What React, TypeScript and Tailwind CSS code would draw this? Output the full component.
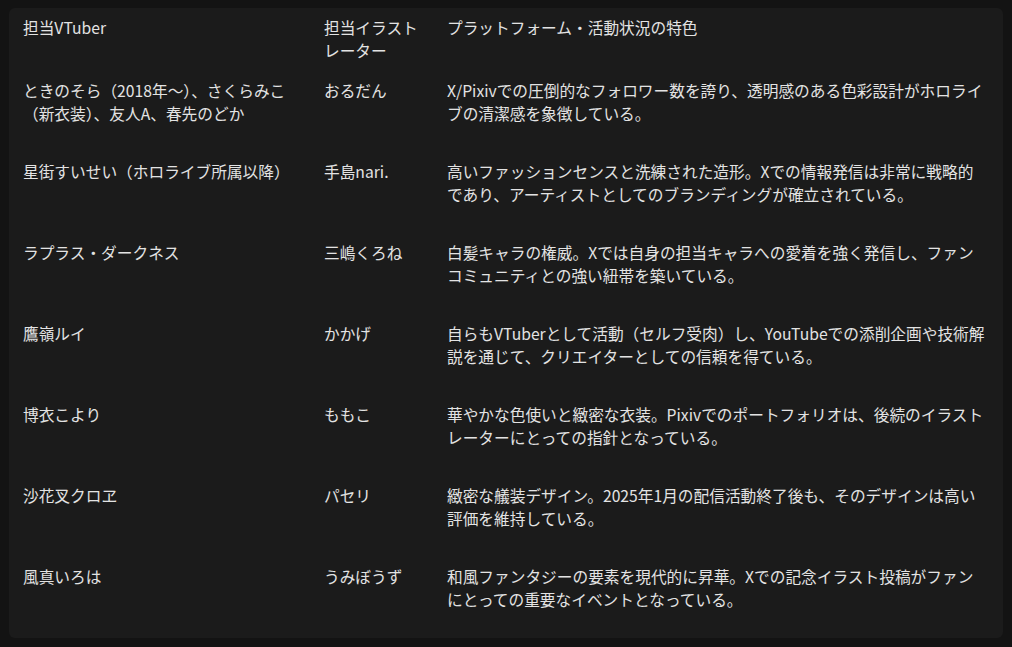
// Line breaks follow the reference table's wrapping.
const ROWS: [string, string, string][] = [
  [
    'ときのそら（2018年〜）、さくらみこ\n（新衣装）、友人A、春先のどか',
    'おるだん',
    'X/Pixivでの圧倒的なフォロワー数を誇り、透明感のある色彩設計がホロライ\nブの清潔感を象徴している。',
  ],
  [
    '星街すいせい（ホロライブ所属以降）',
    '手島nari.',
    '高いファッションセンスと洗練された造形。Xでの情報発信は非常に戦略的\nであり、アーティストとしてのブランディングが確立されている。',
  ],
  [
    'ラプラス・ダークネス',
    '三嶋くろね',
    '白髪キャラの権威。Xでは自身の担当キャラへの愛着を強く発信し、ファン\nコミュニティとの強い紐帯を築いている。',
  ],
  [
    '鷹嶺ルイ',
    'かかげ',
    '自らもVTuberとして活動（セルフ受肉）し、YouTubeでの添削企画や技術解\n説を通じて、クリエイターとしての信頼を得ている。',
  ],
  [
    '博衣こより',
    'ももこ',
    '華やかな色使いと緻密な衣装。Pixivでのポートフォリオは、後続のイラスト\nレーターにとっての指針となっている。',
  ],
  [
    '沙花叉クロヱ',
    'パセリ',
    '緻密な艤装デザイン。2025年1月の配信活動終了後も、そのデザインは高い\n評価を維持している。',
  ],
  [
    '風真いろは',
    'うみぼうず',
    '和風ファンタジーの要素を現代的に昇華。Xでの記念イラスト投稿がファン\nにとっての重要なイベントとなっている。',
  ],
];

export default function App() {
  return (
    <div
      className="min-h-[647px] bg-[#131313] pl-[9px] pr-[9px] pt-[8px] pb-[9px] text-[15.7px] leading-[23px] text-[#e3e3e3]"
      style={{ fontFamily: '"Noto Sans CJK JP", "Noto Sans", sans-serif' }}
    >
      <div className="grid grid-cols-[301px_123px_1fr] rounded-md bg-[#1b1b1b] whitespace-pre-line">
        <div className="pl-[14px] pr-[8px] pt-2 pb-[9px]">担当VTuber</div>
        <div className="pl-[14px] pr-[8px] pt-2 pb-[9px]">{'担当イラスト\nレーター'}</div>
        <div className="pl-[14px] pr-[8px] pt-2 pb-[9px]">プラットフォーム・活動状況の特色</div>
        {ROWS.map(([vtuber, artist, note]) => (
          <div key={vtuber} className="contents">
            <div className="pl-[14px] pr-[8px] pt-2 pb-[27px]">{vtuber}</div>
            <div className="pl-[14px] pr-[8px] pt-2 pb-[27px]">{artist}</div>
            <div className="pl-[14px] pr-[8px] pt-2 pb-[27px]">{note}</div>
          </div>
        ))}
      </div>
    </div>
  );
}
